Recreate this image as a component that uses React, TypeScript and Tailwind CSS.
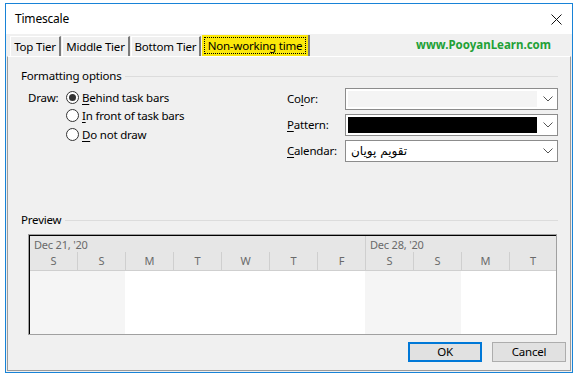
import React from "react";

const days = ["S", "S", "M", "T", "W", "T", "F", "S", "S", "M", "T"];
const weekend = [true, true, false, false, false, false, false, true, true, false, false];

function Radio({ checked, label, keyChar }: { checked?: boolean; label: string; keyChar: string }) {
  const rest = label.slice(1);
  return (
    <div className="flex h-[18.5px] items-center">
      <span className="flex h-[13px] w-[13px] items-center justify-center rounded-full border border-[#333] bg-white">
        {checked && <span className="h-[7px] w-[7px] rounded-full bg-[#333]" />}
      </span>
      <span className="ml-[3px]">
        <span className="underline underline-offset-2">{keyChar}</span>
        {rest}
      </span>
    </div>
  );
}

function Chevron() {
  return (
    <svg width="10" height="6" viewBox="0 0 10 6" className="shrink-0">
      <path d="M0.5 0.5 L5 5 L9.5 0.5" fill="none" stroke="#555" strokeWidth="1" />
    </svg>
  );
}

function Combo({ children, fill }: { children?: React.ReactNode; fill?: string }) {
  return (
    <div className="flex h-[22px] flex-1 items-center border border-[#8c8c8c] bg-white pl-[2px] pr-[4px]">
      <div className={`mr-[6px] flex h-[16px] flex-1 items-center ${fill ?? ""}`}>{children}</div>
      <Chevron />
    </div>
  );
}

const tabCls =
  "flex h-[20px] items-center justify-center whitespace-nowrap border-l border-t border-r-2 border-l-white border-t-white border-r-[#7a7a7a]";

export default function App() {
  return (
    <div className="h-[378px] w-[578px] overflow-hidden bg-white pl-[5px] pt-[3px] font-['Noto_Sans',sans-serif] text-[11.5px] tracking-[-0.2px] text-black">
      <div className="flex h-[370px] w-[568px] flex-col border border-[#1883d7] bg-[#f0f0f0]">
        {/* title bar */}
        <div className="flex h-[30px] items-center justify-between bg-white pl-[9px] pr-[10px]">
          <span className="text-[12px]">Timescale</span>
          <svg width="11" height="11" viewBox="0 0 11 11">
            <path d="M0.5 0.5 L10.5 10.5 M10.5 0.5 L0.5 10.5" stroke="#111" strokeWidth="1" />
          </svg>
        </div>

        {/* tabs */}
        <div className="flex h-[22px] items-end pl-[4px]">
          <div className={`${tabCls} w-[51px]`}>Top Tier</div>
          <div className={`${tabCls} ml-[1px] w-[68px]`}>Middle Tier</div>
          <div className={`${tabCls} ml-[1px] w-[70px]`}>Bottom Tier</div>
          <div className="ml-[1px] flex h-[21px] w-[108px] items-center justify-center border-r-2 border-r-[#7a7a7a] bg-[#fbe80a] p-[2px]">
            <div className="flex h-full w-full items-center justify-center whitespace-nowrap border border-dotted border-black">
              Non-working time
            </div>
          </div>
          <div className="flex h-[22px] flex-1 items-center justify-end whitespace-nowrap pr-[21px] text-[11.5px] font-bold tracking-normal text-[#22a036]">
            www.PooyanLearn.com
          </div>
        </div>

        {/* panel */}
        <div className="mx-[1px] mb-[1px] flex flex-1 flex-col border-x border-b border-t border-x-[#9a9a9a] border-b-[#9a9a9a] border-t-white">
          <div className="mt-[11px] flex h-[16px] items-center pl-[13px] pr-[12px]">
            <span>Formatting options</span>
            <div className="ml-[4px] h-px flex-1 bg-[#dcdcdc]" />
          </div>

          <div className="mt-[4px] flex pl-[20px] pr-[12px]">
            <div className="flex w-[259px]">
              <div className="flex h-[18.5px] w-[38px] items-center">Draw:</div>
              <div className="flex flex-col">
                <Radio checked keyChar="B" label="Behind task bars" />
                <Radio keyChar="I" label="In front of task bars" />
                <Radio keyChar="D" label="Do not draw" />
              </div>
            </div>
            <div className="flex flex-1 flex-col gap-[4px]">
              <div className="flex items-center">
                <span className="w-[58px]">
                  Co<span className="underline underline-offset-2">l</span>or:
                </span>
                <Combo fill="bg-[#f4f4f4]" />
              </div>
              <div className="flex items-center">
                <span className="w-[58px]">
                  <span className="underline underline-offset-2">P</span>attern:
                </span>
                <Combo fill="bg-black" />
              </div>
              <div className="flex items-center">
                <span className="w-[58px]">
                  <span className="underline underline-offset-2">C</span>alendar:
                </span>
                <Combo>
                  <span className="pl-[3px] font-['DejaVu_Sans',sans-serif] text-[12px] tracking-normal">تقویم پویان</span>
                </Combo>
              </div>
            </div>
          </div>

          <div className="mt-[50px] flex h-[16px] items-center pl-[13px] pr-[12px]">
            <span>Preview</span>
            <div className="ml-[4px] h-px flex-1 bg-[#dcdcdc]" />
          </div>

          {/* preview box */}
          <div className="ml-[20px] mt-[6px] w-[529px] border border-[#a0a0a0]">
            <div className="border-l border-t border-black">
              <div className="grid grid-cols-[47px_repeat(9,48px)_47px] bg-[#e6e6e6] text-[11px] text-[#6a6a6a]">
                <div className="col-span-7 flex h-[16px] items-center pl-[4px] pt-[2px]">Dec 21, '20</div>
                <div className="col-span-4 flex h-[16px] items-center border-l border-[#cfcfcf] pl-[4px] pt-[2px]">
                  Dec 28, '20
                </div>
                {days.map((d, i) => (
                  <div
                    key={i}
                    className={`flex h-[19px] items-center justify-center border-b border-[#cfcfcf] ${
                      i > 0 ? "border-l" : ""
                    }`}
                  >
                    {d}
                  </div>
                ))}
              </div>
              <div className="grid h-[63px] grid-cols-[47px_repeat(9,48px)_47px]">
                {weekend.map((w, i) => (
                  <div key={i} className={w ? "bg-[#f5f5f5]" : "bg-white"} />
                ))}
              </div>
            </div>
          </div>

          <div className="mt-[7px] flex justify-end gap-[10px] pr-[4px]">
            <button className="flex h-[20px] w-[74px] items-center justify-center border-2 border-[#0078d7] bg-[#e1e1e1]">
              OK
            </button>
            <button className="flex h-[20px] w-[74px] items-center justify-center border border-[#adadad] bg-[#e1e1e1]">
              Cancel
            </button>
          </div>
        </div>
      </div>
    </div>
  );
}
